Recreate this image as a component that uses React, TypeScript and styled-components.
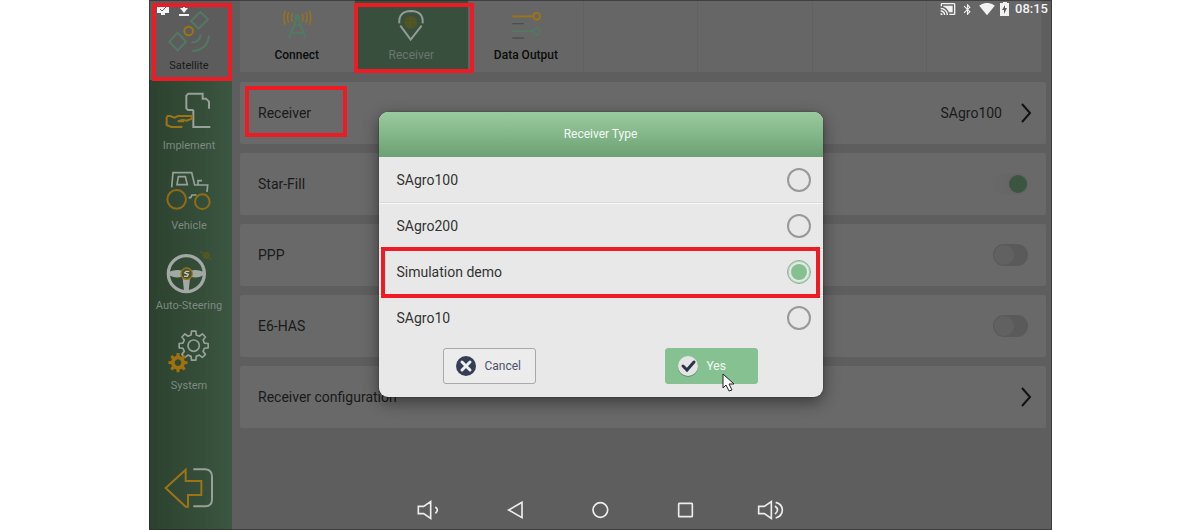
import React from "react";
import styled, { createGlobalStyle, css } from "styled-components";
import { MdBluetooth, MdCastConnected, MdSignalWifi4Bar } from "react-icons/md";

const GREEN = "#527a63";
const AMBER = "#9c7418";
const PALE = "#97a099";

const GlobalStyle = createGlobalStyle`
  *, *::before, *::after { box-sizing: border-box; }
  body { margin: 0; background: #fff; font-family: Roboto, "Liberation Sans", sans-serif; }
  button { font: inherit; border: 0; padding: 0; background: none; cursor: pointer; }
  svg { display: block; flex: none; overflow: visible; }
`;

const Page = styled.div`
  min-height: 100vh;
  display: flex;
  padding: 0 148px 0 149px;
`;

const Device = styled.div`
  position: relative;
  flex: 1;
  display: flex;
  background: #5e5e5e;

  &::after {
    content: "";
    position: absolute;
    inset: 0;
    pointer-events: none;
    box-shadow: inset 0 0 0 1px rgba(40, 36, 40, 0.6);
  }
`;

const Sidebar = styled.nav`
  width: 83px;
  display: flex;
  flex-direction: column;
  padding-bottom: 8px;
  background: linear-gradient(90deg, #2b422e 0%, #324a36 45%, #3b5641 100%);
`;

const SideItem = styled.button<{ $active?: boolean; $last?: boolean }>`
  position: relative;
  display: flex;
  flex-direction: column;
  align-items: center;
  gap: 3px;
  height: 80px;
  padding: 11px 3px 0 0;
  font-size: 11px;
  line-height: 16px;
  color: #7f8981;
  ${(p) =>
    p.$active &&
    css`
      background: #5c5c5c;
      color: #1a1a1a;
    `}
  ${(p) =>
    p.$last &&
    css`
      height: 67px;
      margin-top: auto;
    `}
`;

const Highlight = styled.span<{ $inset: string }>`
  position: absolute;
  inset: ${(p) => p.$inset};
  z-index: 3;
  border: 4px solid #ed1c24;
  pointer-events: none;
`;

const Main = styled.main`
  flex: 1;
  min-width: 0;
  padding: 0 6px 0 8px;
`;

const Tabs = styled.div`
  display: grid;
  grid-template-columns: repeat(7, 1fr);
  height: 72px;
  margin: 0 4px 10px 0;
`;

const Tab = styled.button<{ $active?: boolean }>`
  position: relative;
  display: flex;
  flex-direction: column;
  align-items: center;
  gap: 7px;
  padding-top: 10px;
  border-right: 1px solid #616161;
  background: #666;
  font-size: 12px;
  line-height: 16px;
  font-weight: 500;
  color: #0c0c0c;
  ${(p) =>
    p.$active &&
    css`
      background: #384f3e;
      font-weight: 400;
      color: #69776d;
    `}
`;

const Rows = styled.div`
  display: flex;
  flex-direction: column;
  gap: 9px;
`;

const rowStyle = css`
  position: relative;
  display: flex;
  align-items: center;
  gap: 18px;
  height: 62px;
  padding: 0 14px 0 18px;
  border-radius: 2px;
  background: #696969;
  font-size: 14px;
  line-height: 20px;
  color: #1a1a1a;
  text-align: left;
`;

const LinkRow = styled.button`
  ${rowStyle}
`;

const SwitchRow = styled.label`
  ${rowStyle}
  padding-right: 18px;
`;

const RowLabel = styled.span`
  flex: 1;
`;

const Toggle = styled.input`
  appearance: none;
  display: flex;
  align-items: center;
  width: 35px;
  height: 22px;
  margin: 0;
  padding: 1px;
  border-radius: 11px;
  background: #5a5a5a;

  &::before {
    content: "";
    width: 20px;
    height: 20px;
    border-radius: 50%;
    background: #616161;
  }

  &:checked {
    justify-content: flex-end;
    background: linear-gradient(90deg, #686868, #646464);
  }

  &:checked::before {
    width: 18px;
    height: 18px;
    background: #3a5542;
  }
`;

const StatusBar = styled.div`
  position: absolute;
  inset: 0 0 auto 0;
  z-index: 2;
  display: flex;
  align-items: center;
  justify-content: space-between;
  height: 18px;
  padding: 0 4px 0 7px;
  color: #f2f2f2;
  pointer-events: none;
`;

const StatusGroup = styled.div<{ $gap: number }>`
  display: flex;
  align-items: center;
  gap: ${(p) => p.$gap}px;
  font-size: 13px;
  line-height: 16px;
  font-weight: 500;
`;

const SystemNav = styled.div`
  position: absolute;
  inset: auto 0 8px 0;
  display: flex;
  justify-content: center;
  gap: 57px;
  padding-right: 2px;
  pointer-events: none;
`;

const SystemButton = styled.button`
  color: #ececec;
  pointer-events: auto;
`;

const Overlay = styled.div`
  position: absolute;
  inset: 0;
  z-index: 4;
  display: flex;
  align-items: flex-start;
  justify-content: center;
  padding-top: 112px;
  pointer-events: none;
`;

const Dialog = styled.form`
  width: 444px;
  border-radius: 9px;
  background: #e8e8e8;
  box-shadow: 0 5px 16px rgba(0, 0, 0, 0.45), 0 0 2px rgba(0, 0, 0, 0.4);
  pointer-events: auto;
`;

const DialogTitle = styled.h2`
  margin: 0;
  height: 45px;
  border-radius: 9px 9px 0 0;
  background: linear-gradient(#9acb9f, #6ca174);
  font-size: 12px;
  line-height: 45px;
  font-weight: 400;
  text-align: center;
  color: #f4faf4;
`;

const Option = styled.label`
  position: relative;
  display: flex;
  align-items: center;
  justify-content: space-between;
  height: 46px;
  padding: 0 12px 0 18px;
  font-size: 14px;
  line-height: 20px;
  color: #333;

  & + & {
    box-shadow: inset 0 1px #f8f8f8, 0 -1px #dadada;
  }
`;

const Radio = styled.input`
  appearance: none;
  width: 24px;
  height: 24px;
  margin: 0;
  border: 2px solid #999;
  border-radius: 50%;

  &:checked {
    border: 1px solid #86b592;
    padding: 3px;
    background: #84c191 content-box;
    box-shadow: inset 0 0 0 1px #b5d6bd;
  }
`;

const Actions = styled.div`
  display: flex;
  justify-content: space-between;
  padding: 7px 65px 13px 64px;
`;

const ActionButton = styled.button<{ $primary?: boolean }>`
  && {
    position: relative;
    display: flex;
    align-items: center;
    gap: 8px;
    width: 93px;
    height: 36px;
    padding-left: 11px;
    border: 1px solid ${(p) => (p.$primary ? "#86c191" : "#a9a9ac")};
    border-radius: 3px;
    background: ${(p) => (p.$primary ? "#86c191" : "#ececec")};
    font-size: 12px;
    line-height: 16px;
    color: ${(p) => (p.$primary ? "#f2faf3" : "#4c5268")};
  }
`;

const Cursor = styled.svg`
  position: absolute;
  left: 56px;
  top: 24px;
`;

type IconProps = { box: string; w: number; h: number; children: React.ReactNode };

function Icon({ box, w, h, children }: IconProps) {
  return (
    <svg width={w} height={h} viewBox={box} fill="none" strokeWidth={6} aria-hidden="true">
      {children}
    </svg>
  );
}

const SatelliteIcon = () => (
  <Icon box="81 33 132 132" w={44} h={44}>
    <g stroke={GREEN}>
      <path d="M181 36 204 58 176 86 153 63Z" />
      <path d="M113 98 138 125 113 151 88 125Z" />
      <path d="M182 104Q180 126 154 128M207 107Q203 149 157 153" />
    </g>
    <circle cx="146" cy="93" r="13" stroke={AMBER} />
  </Icon>
);

const ImplementIcon = () => (
  <Icon box="81 273 132 132" w={44} h={44}>
    <path
      d="M160 330H144L139 325V287L145 281H188V296H198L207 305V326M160 330V381H211"
      stroke={PALE}
    />
    <path
      d="M80 348H90L104 353 114 348H156V356L140 362 128 359 113 364H132M80 350V375L94 381H124V377"
      stroke={AMBER}
    />
  </Icon>
);

const VehicleIcon = () => (
  <Icon box="81 63 132 132" w={44} h={44}>
    <g stroke={PALE} strokeWidth={5}>
      <path d="M95 112 99 68H155L164 105H174V92H186M174 105H203L201 126M146 143H152L156 135H170" />
      <path d="M111 104 115 80H136L142 104Z" />
    </g>
    <g stroke="#8f6c16">
      <circle cx="110" cy="148" r="28" />
      <circle cx="187" cy="155" r="22" />
    </g>
  </Icon>
);

const SteeringIcon = () => (
  <Icon box="81 303 132 132" w={44} h={44}>
    <circle cx="139" cy="371" r="54" stroke="#a2a8a3" strokeWidth={10} />
    <path
      d="M86 366Q110 356 128 363V378Q110 388 88 376ZM192 366Q168 356 150 363V378Q168 388 190 376ZM128 384H150L146 424H132Z"
      fill="#a2a8a3"
    />
    <circle cx="140" cy="371" r="17" fill="#48512e" stroke={AMBER} strokeWidth={4} />
    <path d="M148 364H138L134 369 145 373 142 379H132" stroke="#c3c6c0" strokeWidth={4} />
    <g fill="#525622">
      <circle cx="199" cy="316" r="11" />
      <circle cx="184" cy="307" r="4" />
      <circle cx="211" cy="327" r="4" />
    </g>
  </Icon>
);

function gearPath(cx: number, cy: number, outer: number, inner: number) {
  const points: string[] = [];
  const teeth = 8;
  for (let i = 0; i < teeth; i++) {
    const mid = (i * 2 * Math.PI) / teeth;
    [
      [-0.24, inner],
      [-0.15, outer],
      [0.15, outer],
      [0.24, inner],
    ].forEach(([offset, radius]) => {
      const x = cx + Math.sin(mid + offset) * radius;
      const y = cy - Math.cos(mid + offset) * radius;
      points.push(`${x.toFixed(1)} ${y.toFixed(1)}`);
    });
  }
  return `M${points.join("L")}Z`;
}

const SystemIcon = () => (
  <Icon box="81 93 132 132" w={44} h={44}>
    <g stroke={PALE} strokeLinejoin="round" strokeWidth={5}>
      <path d={gearPath(161, 137, 44, 33)} />
      <circle cx="161" cy="137" r="17" />
    </g>
    <path
      d={gearPath(114, 188, 29, 21) + "M114 178a10 10 0 1 0 .1 0Z"}
      fill="#a0720d"
      fillRule="evenodd"
    />
  </Icon>
);

const ExitIcon = () => (
  <Icon box="81 500 132 132" w={44} h={44}>
    <path d="M77 566 137 511V545H184V587H144V622H137Z" stroke={AMBER} />
    <path d="M160 510H196Q216 512 216 532V600Q216 621 196 621H160" stroke={PALE} />
  </Icon>
);

const ConnectIcon = () => (
  <Icon box="414 30 120 90" w={40} h={30}>
    <circle cx="475" cy="52" r="9" fill={GREEN} />
    <path
      d="M472 56 450 115M478 56 500 115M465 76H485M457 98H493"
      stroke={GREEN}
      strokeWidth={6}
    />
    <path
      d="M461 40Q454 52 461 65M450 36Q441 52 450 69M439 32Q430 52 439 74M489 40Q496 52 489 65M500 36Q509 52 500 69M511 32Q520 52 511 74"
      stroke={AMBER}
      strokeWidth={4}
    />
  </Icon>
);

const ReceiverIcon = () => (
  <Icon box="128 30 120 90" w={40} h={30}>
    <circle cx="187" cy="67" r="20" fill="#4d5425" />
    <path d="M187 50V84M170 67H204" stroke="#5a581e" strokeWidth={3} />
    <path d="M153 70Q150 34 188 33 226 34 223 70M156 77 187 119 220 77" stroke="#929b94" />
  </Icon>
);

const DataIcon = () => (
  <Icon box="470 30 120 90" w={40} h={30}>
    <path d="M489 49H551" stroke={AMBER} />
    <circle cx="562" cy="49" r="10" stroke={AMBER} />
    <path d="M489 71H524M489 114H524" stroke="#46524b" strokeWidth={4} />
    <path d="M489 94H551" stroke={GREEN} strokeWidth={5} />
    <circle cx="562" cy="94" r="10" stroke={GREEN} strokeWidth={5} />
  </Icon>
);

const Chevron = () => (
  <Icon box="0 0 12 20" w={12} h={20}>
    <path d="M2 1 10 10 2 19" stroke="#121212" strokeWidth={2} />
  </Icon>
);

const systemButtons = [
  {
    name: "Volume down",
    box: "138 595 84 72",
    shape: <path d="M145 620H161L182 606V656L161 642H145ZM196 622Q208 631 196 641" />,
  },
  { name: "Back", box: "393 595 84 72", shape: <path d="M456 608 416 631 456 654Z" /> },
  { name: "Home", box: "648 595 84 72", shape: <circle cx="691" cy="631" r="22" /> },
  {
    name: "Recent apps",
    box: "213 595 84 72",
    shape: <rect x="236" y="611" width="41" height="40" rx="2" />,
  },
  {
    name: "Volume up",
    box: "468 595 84 72",
    shape: (
      <path d="M476 620H493L514 606V656L493 642H476ZM525 619Q540 631 525 643M527 608Q547 613 547 631T527 655" />
    ),
  },
];

const sideItems = [
  { label: "Implement", icon: <ImplementIcon /> },
  { label: "Vehicle", icon: <VehicleIcon /> },
  { label: "Auto-Steering", icon: <SteeringIcon /> },
  { label: "System", icon: <SystemIcon /> },
];

const switches = [
  { label: "Star-Fill", on: true },
  { label: "PPP", on: false },
  { label: "E6-HAS", on: false },
];

const receivers = ["SAgro100", "SAgro200", "Simulation demo", "SAgro10"];

export default function App() {
  return (
    <Page>
      <GlobalStyle />
      <Device>
        <Sidebar>
          <SideItem $active>
            <SatelliteIcon />
            Satellite
            <Highlight $inset="3px 0 -1px 3px" />
          </SideItem>
          {sideItems.map((item) => (
            <SideItem key={item.label}>
              {item.icon}
              {item.label}
            </SideItem>
          ))}
          <SideItem $last aria-label="Exit">
            <ExitIcon />
          </SideItem>
        </Sidebar>

        <Main>
          <Tabs>
            <Tab>
              <ConnectIcon />
              Connect
            </Tab>
            <Tab $active>
              <ReceiverIcon />
              Receiver
              <Highlight $inset="3px -6px -1px -1px" />
            </Tab>
            <Tab>
              <DataIcon />
              Data Output
            </Tab>
            {[0, 1, 2, 3].map((slot) => (
              <Tab key={slot} as="div" />
            ))}
          </Tabs>

          <Rows>
            <LinkRow>
              <RowLabel>Receiver</RowLabel>
              SAgro100
              <Chevron />
              <Highlight $inset="4px auto 7px 5px" style={{ width: 102 }} />
            </LinkRow>
            {switches.map((item) => (
              <SwitchRow key={item.label}>
                <RowLabel>{item.label}</RowLabel>
                <Toggle type="checkbox" defaultChecked={item.on} />
              </SwitchRow>
            ))}
            <LinkRow>
              <RowLabel>Receiver configuration</RowLabel>
              <Chevron />
            </LinkRow>
          </Rows>
        </Main>

        <StatusBar>
          <StatusGroup $gap={9}>
            <svg width="14" height="14" viewBox="0 0 14 14" aria-hidden="true">
              <path d="M1 2H13V11H9V13H5V11H1Z" fill="#f2f2f2" />
              <path d="M4 7 6 9 10 5" fill="none" stroke="#666" />
            </svg>
            <svg width="10" height="14" viewBox="0 0 10 14" aria-hidden="true">
              <path d="M4 2H6V6H9L5 11 1 6H4ZM0 12H10V14H0Z" fill="#f2f2f2" />
            </svg>
          </StatusGroup>
          <StatusGroup $gap={5}>
            <MdCastConnected size={16} />
            <MdBluetooth size={13} />
            <MdSignalWifi4Bar size={16} />
            <svg width="10" height="14" viewBox="0 0 10 14" aria-hidden="true">
              <path d="M3 0H7V1H9V14H0V1H3Z" fill="#f2f2f2" />
              <path d="M5 3 2 8H4V12L7 6H5Z" fill="#5e5e5e" />
            </svg>
            <span>08:15</span>
          </StatusGroup>
        </StatusBar>

        <SystemNav>
          {systemButtons.map((b) => (
            <SystemButton key={b.name} aria-label={b.name}>
              <Icon box={b.box} w={28} h={24}>
                <g stroke="currentColor" strokeWidth={5}>
                  {b.shape}
                </g>
              </Icon>
            </SystemButton>
          ))}
        </SystemNav>

        <Overlay>
          <Dialog role="dialog" aria-labelledby="receiver-type">
            <DialogTitle id="receiver-type">Receiver Type</DialogTitle>
            {receivers.map((name) => (
              <Option key={name}>
                {name}
                <Radio type="radio" name="receiver" defaultChecked={name === "Simulation demo"} />
                {name === "Simulation demo" && <Highlight $inset="-2px 3px -3px 2px" />}
              </Option>
            ))}
            <Actions>
              <ActionButton type="button">
                <svg width="22" height="22" viewBox="0 0 22 22" aria-hidden="true">
                  <circle cx="11" cy="11" r="10" fill="#343f57" />
                  <path
                    d="M7 7 15 15M15 7 7 15"
                    stroke="#f0f0f0"
                    strokeWidth="3"
                    strokeLinecap="round"
                  />
                </svg>
                Cancel
              </ActionButton>
              <ActionButton type="button" $primary>
                <svg width="22" height="22" viewBox="0 0 22 22" aria-hidden="true">
                  <circle cx="11" cy="12" r="10" fill="#5f8f6a" />
                  <circle cx="11" cy="11" r="10" fill="#e4e6e6" />
                  <path
                    d="M6 11 10 15 17 7"
                    fill="none"
                    stroke="#2c3548"
                    strokeWidth="3"
                    strokeLinecap="round"
                  />
                </svg>
                Yes
                <Cursor width="14" height="20" viewBox="0 0 14 20" aria-hidden="true">
                  <path
                    d="M1 1V15L4 12 7 18 10 17 7 11H12Z"
                    fill="#fff"
                    stroke="#222"
                    strokeWidth="1"
                    strokeLinejoin="round"
                  />
                </Cursor>
              </ActionButton>
            </Actions>
          </Dialog>
        </Overlay>
      </Device>
    </Page>
  );
}
